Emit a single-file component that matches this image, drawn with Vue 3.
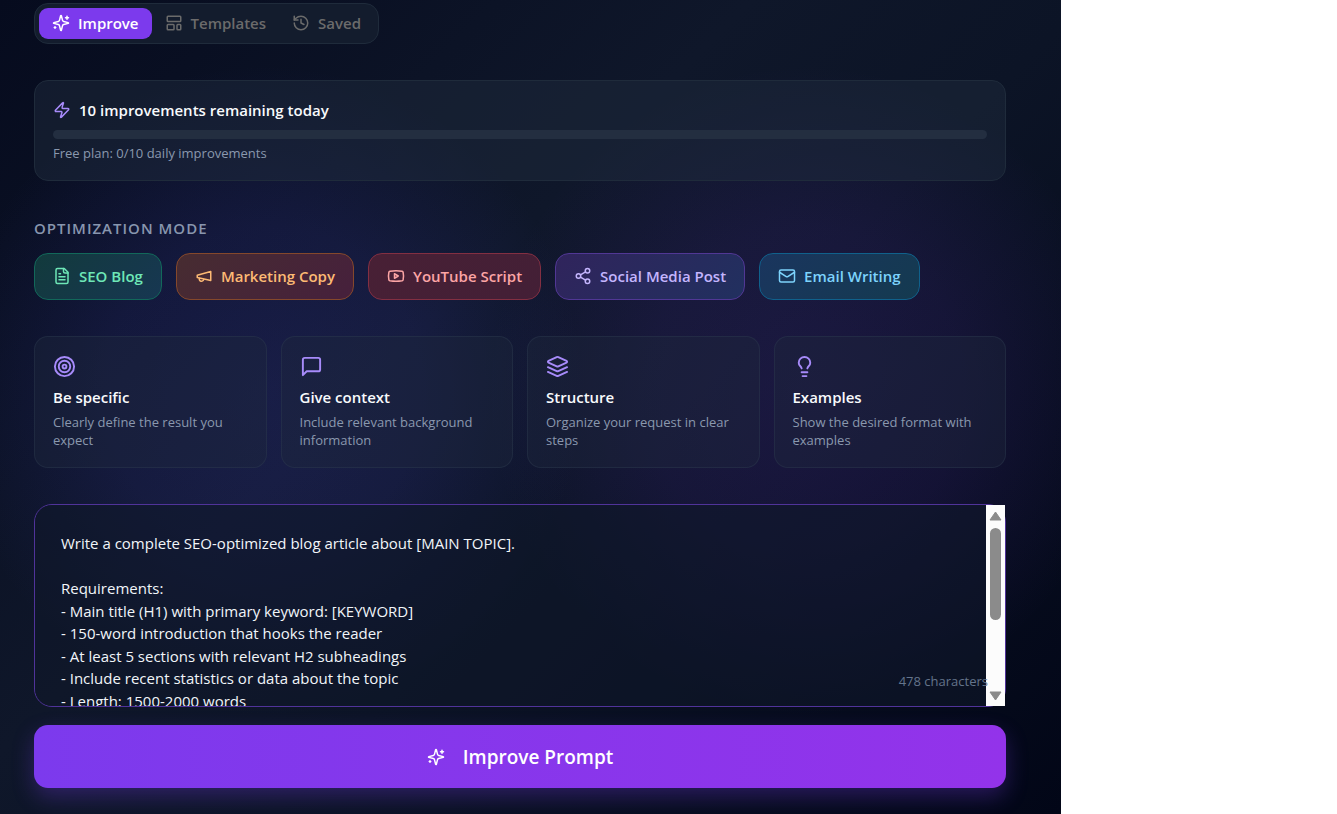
<template>
  <div class="shell">
    <main class="page">
      <nav class="tabs">
        <button
          v-for="tab in tabs"
          :key="tab.label"
          type="button"
          class="tab"
          :class="{ active: tab.label === activeTab }"
          @click="activeTab = tab.label"
        >
          <Icon :name="tab.icon" />
          {{ tab.label }}
        </button>
      </nav>

      <section class="quota">
        <div class="quota-title">
          <Icon name="zap" class="accent" />
          <span>{{ limit - used }} improvements remaining today</span>
        </div>
        <div class="bar">
          <div class="bar-fill" :style="{ width: (used / limit) * 100 + '%' }"></div>
        </div>
        <p class="quota-note">Free plan: {{ used }}/{{ limit }} daily improvements</p>
      </section>

      <section class="modes">
        <h2 class="modes-title">Optimization mode</h2>
        <div class="chips">
          <button
            v-for="mode in modes"
            :key="mode.label"
            type="button"
            class="chip"
            :class="mode.color"
          >
            <Icon :name="mode.icon" />
            {{ mode.label }}
          </button>
        </div>
      </section>

      <section class="tips">
        <article v-for="tip in tips" :key="tip.title" class="tip">
          <Icon :name="tip.icon" class="tip-icon accent" />
          <h3>{{ tip.title }}</h3>
          <p>{{ tip.text }}</p>
        </article>
      </section>

      <form class="editor" @submit.prevent>
        <div class="field">
          <textarea
            v-model="prompt"
            class="prompt"
            aria-label="Prompt"
            spellcheck="false"
            @scroll="onScroll"
          ></textarea>
          <div class="scrollbar" aria-hidden="true">
            <svg class="arrow" viewBox="0 0 13 10"><path d="M6.5 1 12 9H1z" /></svg>
            <div class="track">
              <div class="thumb" :style="{ top: scrolled * 41 + '%' }"></div>
            </div>
            <svg class="arrow" viewBox="0 0 13 10"><path d="M6.5 9 12 1H1z" /></svg>
          </div>
          <span class="count">{{ prompt.length }} characters</span>
        </div>
        <button type="submit" class="submit">
          <Icon name="sparkles" />
          Improve Prompt
        </button>
      </form>
    </main>
  </div>
</template>

<script setup>
import { h, ref } from "vue";

const icons = {
  sparkles: [
    "M9.937 15.5A2 2 0 0 0 8.5 14.063l-6.135-1.582a.5.5 0 0 1 0-.962L8.5 9.936A2 2 0 0 0 9.937 8.5l1.582-6.135a.5.5 0 0 1 .963 0L14.063 8.5A2 2 0 0 0 15.5 9.937l6.135 1.581a.5.5 0 0 1 0 .964L15.5 14.063a2 2 0 0 0-1.437 1.437l-1.582 6.135a.5.5 0 0 1-.963 0z",
    "M20 3v4M22 5h-4M4 17v2M5 18H3"
  ],
  template: [
    "M4 3h16a1 1 0 0 1 1 1v5a1 1 0 0 1-1 1H4a1 1 0 0 1-1-1V4a1 1 0 0 1 1-1z",
    "M4 14h7a1 1 0 0 1 1 1v5a1 1 0 0 1-1 1H4a1 1 0 0 1-1-1v-5a1 1 0 0 1 1-1z",
    "M17 14h3a1 1 0 0 1 1 1v5a1 1 0 0 1-1 1h-3a1 1 0 0 1-1-1v-5a1 1 0 0 1 1-1z"
  ],
  history: ["M3 12a9 9 0 1 0 9-9 9.75 9.75 0 0 0-6.74 2.74L3 8", "M3 3v5h5", "M12 7v5l4 2"],
  zap: [
    "M4 14a1 1 0 0 1-.78-1.63l9.9-10.2a.5.5 0 0 1 .86.46l-1.92 6.02A1 1 0 0 0 13 10h7a1 1 0 0 1 .78 1.63l-9.9 10.2a.5.5 0 0 1-.86-.46l1.92-6.02A1 1 0 0 0 11 14z"
  ],
  file: [
    "M15 2H6a2 2 0 0 0-2 2v16a2 2 0 0 0 2 2h12a2 2 0 0 0 2-2V7z",
    "M14 2v4a2 2 0 0 0 2 2h4",
    "M10 9H8M16 13H8M16 17H8"
  ],
  megaphone: ["m3 11 18-5v12L3 14v-3z", "M11.6 16.8a3 3 0 1 1-5.8-1.6"],
  video: [
    "M2.5 17a24.12 24.12 0 0 1 0-10 2 2 0 0 1 1.4-1.4 49.56 49.56 0 0 1 16.2 0A2 2 0 0 1 21.5 7a24.12 24.12 0 0 1 0 10 2 2 0 0 1-1.4 1.4 49.55 49.55 0 0 1-16.2 0A2 2 0 0 1 2.5 17",
    "m10 15 5-3-5-3z"
  ],
  share: [
    "M15 5a3 3 0 1 0 6 0 3 3 0 1 0-6 0",
    "M3 12a3 3 0 1 0 6 0 3 3 0 1 0-6 0",
    "M15 19a3 3 0 1 0 6 0 3 3 0 1 0-6 0",
    "M8.59 13.51l6.83 3.98M15.41 6.51l-6.82 3.98"
  ],
  mail: [
    "M4 4h16a2 2 0 0 1 2 2v12a2 2 0 0 1-2 2H4a2 2 0 0 1-2-2V6a2 2 0 0 1 2-2z",
    "m22 7-8.97 5.7a1.94 1.94 0 0 1-2.06 0L2 7"
  ],
  target: [
    "M2 12a10 10 0 1 0 20 0 10 10 0 1 0-20 0",
    "M6 12a6 6 0 1 0 12 0 6 6 0 1 0-12 0",
    "M10 12a2 2 0 1 0 4 0 2 2 0 1 0-4 0"
  ],
  message: ["M21 15a2 2 0 0 1-2 2H7l-4 4V5a2 2 0 0 1 2-2h14a2 2 0 0 1 2 2z"],
  layers: [
    "m12.83 2.18a2 2 0 0 0-1.66 0L2.6 6.08a1 1 0 0 0 0 1.83l8.58 3.91a2 2 0 0 0 1.66 0l8.58-3.9a1 1 0 0 0 0-1.83Z",
    "m22 17.65-9.17 4.16a2 2 0 0 1-1.66 0L2 17.65",
    "m22 12.65-9.17 4.16a2 2 0 0 1-1.66 0L2 12.65"
  ],
  bulb: [
    "M15 14c.2-1 .7-1.7 1.5-2.5 1-.9 1.5-2.2 1.5-3.5A6 6 0 0 0 6 8c0 1 .2 2.2 1.5 3.5.7.7 1.3 1.5 1.5 2.5",
    "M9 18h6M10 22h4"
  ]
};

const Icon = props =>
  h(
    "svg",
    { class: "icon", viewBox: "0 0 24 24", "aria-hidden": "true" },
    icons[props.name].map(d => h("path", { d }))
  );
Icon.props = ["name"];

const tabs = [
  { label: "Improve", icon: "sparkles" },
  { label: "Templates", icon: "template" },
  { label: "Saved", icon: "history" }
];
const activeTab = ref("Improve");

const used = 0;
const limit = 10;

const modes = [
  { label: "SEO Blog", icon: "file", color: "green" },
  { label: "Marketing Copy", icon: "megaphone", color: "orange" },
  { label: "YouTube Script", icon: "video", color: "red" },
  { label: "Social Media Post", icon: "share", color: "violet" },
  { label: "Email Writing", icon: "mail", color: "sky" }
];

const tips = [
  { title: "Be specific", text: "Clearly define the result you expect", icon: "target" },
  { title: "Give context", text: "Include relevant background information", icon: "message" },
  { title: "Structure", text: "Organize your request in clear steps", icon: "layers" },
  { title: "Examples", text: "Show the desired format with examples", icon: "bulb" }
];

const prompt = ref(`Write a complete SEO-optimized blog article about [MAIN TOPIC].

Requirements:
- Main title (H1) with primary keyword: [KEYWORD]
- 150-word introduction that hooks the reader
- At least 5 sections with relevant H2 subheadings
- Include recent statistics or data about the topic
- Length: 1500-2000 words
- Tone: professional but accessible
- Conclusion with call to action
- Meta description of 155 characters
- Suggest 3 internal link ideas

Target audience: [DESCRIBE READERS]`);

// 0 at the top of the prompt, 1 at the end
const scrolled = ref(0);

function onScroll(e) {
  const el = e.target;
  scrolled.value = el.scrollTop / Math.max(1, el.scrollHeight - el.clientHeight);
}
</script>

<style>
body {
  margin: 0;
  background: #fff;
}
</style>

<style scoped>
.shell {
  display: grid;
  grid-template-columns: minmax(0, 1fr) 276px;
  min-height: 100vh;
  font-family: "Segoe UI", "Open Sans", "Noto Sans", sans-serif;
  font-size: 15px;
  color: #f8fafc;
}

.shell * {
  box-sizing: border-box;
}

button,
textarea {
  font: inherit;
}

.page {
  display: flex;
  flex-direction: column;
  gap: 36px;
  padding: 3px 55px 26px 34px;
  background:
    radial-gradient(ellipse 30% 40% at 25% 48%, rgba(79, 70, 229, 0.16), rgba(79, 70, 229, 0.12) 50%, transparent),
    radial-gradient(ellipse 30% 40% at 76% 48%, rgba(124, 58, 237, 0.14), rgba(124, 58, 237, 0.1) 50%, transparent),
    linear-gradient(135deg, #060b1e, #0f172a 40%, #0c1426 58%, #020617);
}

.icon {
  flex: none;
  width: 18px;
  height: 18px;
  fill: none;
  stroke: currentColor;
  stroke-width: 2;
  stroke-linecap: round;
  stroke-linejoin: round;
}

.accent {
  color: #a78bfa;
}

.tabs {
  display: flex;
  align-self: flex-start;
  padding: 4px;
  border: 1px solid #1f2b3b;
  border-radius: 14px;
  background: #131c2d;
}

.tab {
  display: flex;
  align-items: center;
  gap: 8px;
  height: 31px;
  padding: 0 13px 1px;
  border: none;
  border-radius: 9px;
  background: none;
  color: #6b6b6b;
  font-weight: 600;
}

.tab.active {
  background: #7c3aed;
  color: #fff;
}

.quota {
  padding: 18px;
  border: 1px solid #1f2b3b;
  border-radius: 14px;
  background: rgba(30, 41, 59, 0.5);
}

.quota-title {
  display: flex;
  align-items: center;
  gap: 8px;
  line-height: 22px;
  font-weight: 600;
}

.bar {
  height: 9px;
  margin: 9px 0 6px;
  border-radius: 5px;
  background: #232e40;
  overflow: hidden;
}

.bar-fill {
  height: 100%;
  background: #7c3aed;
}

.quota-note {
  margin: 0;
  font-size: 13px;
  line-height: 17px;
  color: #8a98ae;
}

.modes-title {
  margin: 0 0 14px;
  font-size: 15px;
  line-height: 22px;
  font-weight: 600;
  letter-spacing: 1px;
  text-transform: uppercase;
  color: #8896ae;
}

.chips {
  display: flex;
  flex-wrap: wrap;
  gap: 14px;
}

.chip {
  display: flex;
  align-items: center;
  gap: 8px;
  height: 47px;
  padding: 0 18px 1px;
  border: 1px solid;
  border-radius: 14px;
  font-weight: 600;
}

.green {
  border-color: #12685a;
  background: linear-gradient(135deg, #123a3c, #173752);
  color: #6ee7b7;
}

.orange {
  border-color: #85482b;
  background: linear-gradient(135deg, #472c31, #46203c);
  color: #fdba74;
}

.red {
  border-color: #832f42;
  background: linear-gradient(135deg, #482035, #431f36);
  color: #fca5a5;
}

.violet {
  border-color: #513795;
  background: linear-gradient(135deg, #30245c, #21305f);
  color: #c4b5fd;
}

.sky {
  border-color: #10618c;
  background: linear-gradient(135deg, #1a355e, #143a50);
  color: #7dd3fc;
}

.tips {
  display: grid;
  grid-template-columns: repeat(4, minmax(0, 1fr));
  gap: 14px;
}

.tip {
  padding: 18px;
  border: 1px solid rgba(51, 65, 85, 0.35);
  border-radius: 14px;
  background: rgba(30, 41, 59, 0.4);
}

.tip-icon {
  display: block;
  width: 23px;
  height: 23px;
}

.tip h3 {
  margin: 8px 0 5px;
  font-size: 15px;
  line-height: 22px;
  font-weight: 600;
}

.tip p {
  margin: 0;
  font-size: 13px;
  line-height: 18px;
  color: #8a98ae;
}

.editor {
  display: flex;
  flex-direction: column;
  gap: 18px;
}

.field {
  position: relative;
}

.prompt {
  display: block;
  width: 100%;
  height: 203px;
  padding: 27px 45px 27px 26px;
  border: 1px solid #50339a;
  border-radius: 18px;
  outline: none;
  resize: none;
  scrollbar-width: none;
  background: rgba(15, 23, 42, 0.6);
  color: #f1f5f9;
  line-height: 1.5;
}

.scrollbar {
  position: absolute;
  top: 1px;
  right: 1px;
  bottom: 1px;
  display: flex;
  flex-direction: column;
  align-items: center;
  gap: 7px;
  width: 19px;
  padding: 6px 0 5px;
  background: #fcfcfc;
}

.arrow {
  flex: none;
  width: 13px;
  height: 10px;
  fill: #8b8b8b;
  stroke: #8b8b8b;
  stroke-linejoin: round;
}

.track {
  position: relative;
  flex: 1;
  width: 11px;
}

.thumb {
  position: absolute;
  width: 100%;
  height: 59%;
  border-radius: 6px;
  background: #8b8b8b;
}

.count {
  position: absolute;
  right: 18px;
  bottom: 17px;
  font-size: 13px;
  line-height: 18px;
  color: #64748b;
}

.submit {
  display: flex;
  align-items: center;
  justify-content: center;
  gap: 18px;
  height: 63px;
  border: none;
  border-radius: 14px;
  background: linear-gradient(90deg, #7c3aed, #9333ea);
  box-shadow: 0 9px 22px rgba(124, 58, 237, 0.3);
  color: #fff;
  font-size: 19px;
  font-weight: 600;
}
</style>
